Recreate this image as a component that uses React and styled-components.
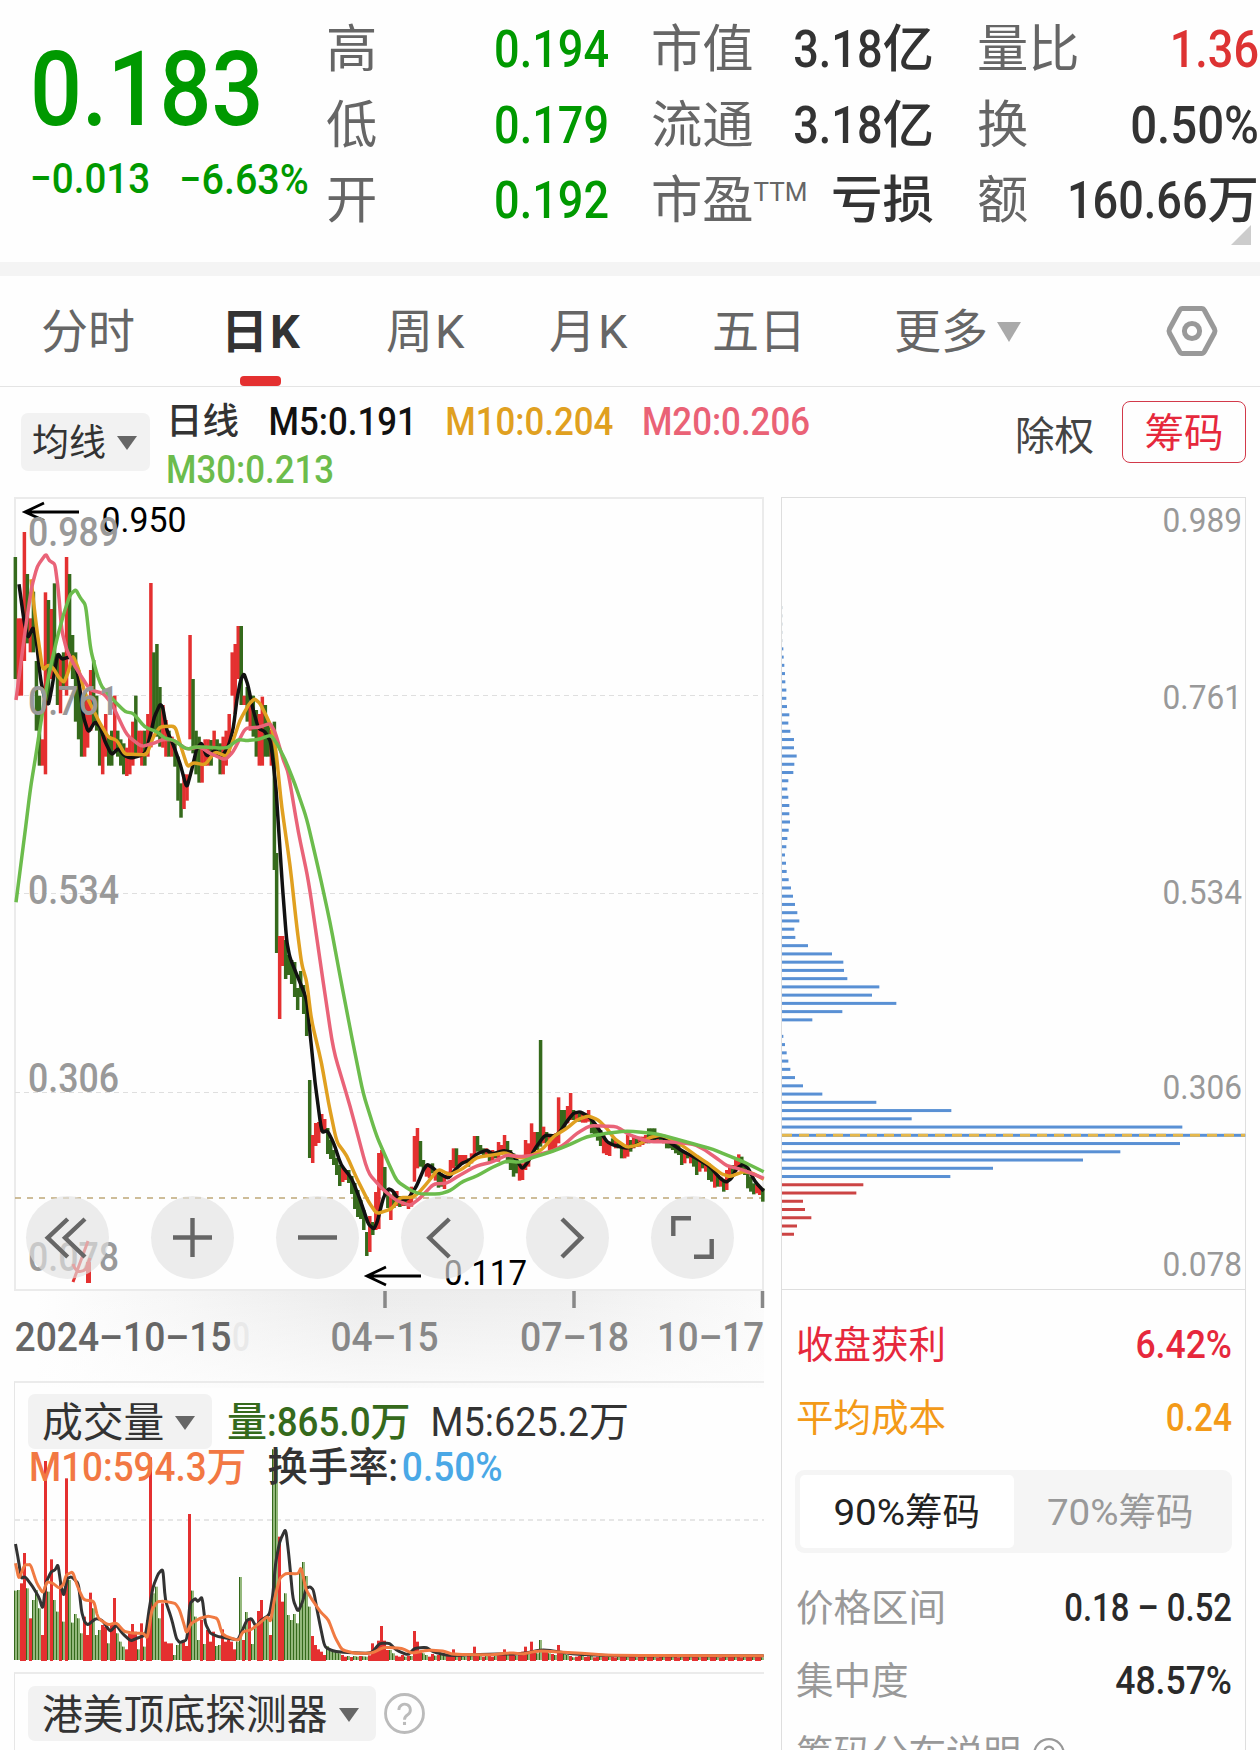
import styled, { createGlobalStyle } from "styled-components";

const RED = "#e43030";
const GREEN = "#356a1c";

const GlobalStyle = createGlobalStyle`
  * { box-sizing: border-box; }
  body {
    margin: 0;
    background: #fefefe;
    color: #333;
    font-family: Roboto, "Noto Sans CJK SC", sans-serif;
  }
`;

const Page = styled.div`
  width: 1260px;
  height: 1750px;
  overflow: hidden;
`;

// narrow, tall digits: a smaller size stretched upwards from the baseline
const Num = styled.span`
  display: inline-block;
  font-size: ${({ $w = 0.88 }) => $w}em;
  line-height: 1;
  white-space: pre;
  transform: scaleY(${({ $w = 0.88 }) => 1 / $w});
  transform-origin: 0 84.15%;
`;

/* ---------- quote header ---------- */

const Header = styled.header`
  height: 276px;
  border-bottom: 14px solid #f4f4f4;
  display: flex;
  padding: 12px 1px 0 30px;
  position: relative;
`;

const PriceBlock = styled.div`
  width: 296px;
  color: #009900;
  font-weight: 500;
`;

const Price = styled.div`
  font-size: 104px;
  line-height: 120px;
  padding-top: 18px;
`;

const Change = styled.div`
  font-size: 42px;
  line-height: 60px;
  margin-top: 11px;
  display: flex;
  gap: 29px;
`;

const StatColumn = styled.dl`
  margin: 0 ${({ $gap }) => $gap}px 0 0;
  width: ${({ $width }) => $width}px;
  flex-shrink: 0;
`;

const Stat = styled.div`
  display: flex;
  justify-content: space-between;
  height: 75.5px;
  line-height: 75.5px;
  font-size: 51.3px;
  white-space: nowrap;
`;

const StatName = styled.dt`
  color: #666;
`;

const Ttm = styled.sup`
  font-size: 26px;
  line-height: 1;
  vertical-align: 17px;
`;

const StatValue = styled.dd`
  margin: 0;
  font-size: 51.5px;
  font-weight: 500;
  color: ${({ $color = "#333" }) => $color};
`;

const Corner = styled.i`
  position: absolute;
  right: 9px;
  bottom: 17px;
  border-left: 20px solid transparent;
  border-bottom: 20px solid #ccc;
`;

/* ---------- period tabs ---------- */

const Tabs = styled.nav`
  height: 111px;
  border-bottom: 1px solid #e4e4e4;
  display: flex;
  padding-left: 41px;
  font-size: 47px;
  color: #666;
`;

const Tab = styled.div`
  width: ${({ $width }) => $width}px;
  display: flex;
  flex-direction: column;
  align-items: flex-start;
  line-height: 112px;
  height: 110px;
  white-space: nowrap;
  font-weight: ${({ $active }) => ($active ? 700 : 400)};
  color: ${({ $active }) => ($active ? "#333" : "inherit")};
`;

const Latin = styled(Num)`
  margin-left: 2px;
`;

const TabBar = styled.i`
  width: 41px;
  height: 10px;
  border-radius: 4px;
  background: ${RED};
  margin: -12px 0 0 19px;
`;

const Arrow = styled.i`
  display: inline-block;
  border: ${({ $size = 10 }) => $size}px solid transparent;
  border-top: ${({ $tall = 14 }) => $tall}px solid ${({ $color = "#666" }) => $color};
  border-bottom: 0;
  margin-left: ${({ $gap = 11 }) => $gap}px;
  vertical-align: ${({ $lift = 7 }) => $lift}px;
`;

const Gear = styled.svg`
  width: 54px;
  height: 54px;
  margin: 28px 0 0 1px;
  fill: none;
  stroke: #999;
`;

/* ---------- moving averages ---------- */

const AverageBar = styled.section`
  height: 110px;
  display: flex;
  padding-left: 21px;
`;

const Picker = styled.div`
  width: ${({ $width }) => $width}px;
  height: ${({ $height = 55 }) => $height}px;
  line-height: ${({ $height = 55 }) => $height + 3}px;
  padding-left: ${({ $pad = 14 }) => $pad}px;
  border-radius: 7px;
  background: #f2f2f2;
  font-size: ${({ $size = 40.8 }) => $size}px;
  font-weight: 400;
  white-space: nowrap;
  flex-shrink: 0;
`;

const AveragePicker = styled(Picker)`
  margin-top: 26px;
`;

const Legend = styled.div`
  width: 700px;
  margin-left: 16px;
  padding-top: 11px;
  font-size: 38.5px;
  line-height: 48px;
  font-weight: 500;
  display: flex;
  flex-wrap: wrap;
  align-content: flex-start;
  column-gap: 28.5px;
`;

const LegendItem = styled.span`
  color: ${({ $color = "#333" }) => $color};
  font-size: ${({ $size }) => ($size ? `${$size}px` : "inherit")};
  font-weight: ${({ $weight = 500 }) => $weight};
  margin-left: ${({ $left = 0 }) => $left}px;
  white-space: nowrap;
`;

const Rights = styled.div`
  margin-left: auto;
  font-size: 39.5px;
  line-height: 99px;
  color: #444;
`;

const ChipsButton = styled.div`
  width: 124px;
  height: 62px;
  margin: 14px 14px 0 28px;
  border: 1.5px solid #d2394a;
  border-radius: 8px;
  color: #e6283c;
  font-size: 39.5px;
  line-height: 63px;
  text-align: center;
`;

/* ---------- main area ---------- */

const Main = styled.main`
  display: flex;
  padding-left: 14px;
  height: 1253px;
`;

const Left = styled.div`
  width: 750px;
  margin-right: 17px;
`;

const PriceChart = styled.div`
  position: relative;
  height: 793px;
`;

const Plot = styled.svg`
  display: block;
  overflow: visible;
`;

const Tools = styled.div`
  position: absolute;
  left: 12px;
  bottom: 11px;
  display: flex;
  gap: 42px;
`;

const Tool = styled.svg`
  width: 83px;
  height: 83px;
  border-radius: 50%;
  background: rgba(226, 226, 226, 0.65);
  fill: none;
  stroke: #666;
  stroke-width: 4.4;
`;

const DateAxis = styled.div`
  height: 98px;
  background:
    linear-gradient(to bottom, transparent, rgba(254, 254, 254, 0.8)),
    linear-gradient(to right, #fefefe 3%, #ebebeb 46%, #eeeeee 72%, #fafafa 100%);
`;

const VolumeChart = styled.section`
  height: 279px;
  margin-top: -7px;
  border-left: 1px solid #e6e6e6;
  border-top: 2px solid #ebebeb;
  position: relative;
`;

const VolumePlot = styled(Plot)`
  position: absolute;
  left: -1px;
  top: -2px;
`;

const VolumeLegend = styled.div`
  position: relative;
  font-size: 40px;
  font-weight: 500;
  color: #333;
`;

const VolumeRow = styled.div`
  display: flex;
  line-height: ${({ $line }) => $line + 2}px;
  height: ${({ $line }) => $line}px;
  padding-left: ${({ $pad }) => $pad}px;
  margin-top: ${({ $top = 0 }) => $top}px;
  column-gap: ${({ $gap }) => $gap}px;
  white-space: nowrap;
`;

const Turnover = styled.span`
  font-size: 40.3px;
`;

const Detector = styled.section`
  margin-top: 12px;
  height: 90px;
  border-left: 1px solid #e6e6e6;
  border-top: 2px solid #ebebeb;
  padding: 12px 0 0 13px;
  display: flex;
  color: #333;
`;

const Help = styled.svg`
  width: ${({ $size }) => $size}px;
  height: ${({ $size }) => $size}px;
  margin: ${({ $top }) => $top}px 0 0 ${({ $left = 8 }) => $left}px;
  fill: none;
  stroke: ${({ $color }) => $color};
`;

const ChipPanel = styled.aside`
  width: 465px;
  border: 1px solid #dedede;
  border-bottom: 0;
  height: 1260px;
`;

const ChipPlot = styled(Plot)`
  border-bottom: 1px solid #dedede;
`;

const ChipInfo = styled.div`
  padding: 19px 13px 0 14px;
  font-size: 37.5px;
`;

const InfoRow = styled.div`
  display: flex;
  justify-content: ${({ $pack = "space-between" }) => $pack};
  height: 73px;
  line-height: 73px;
  color: ${({ $color = "#999" }) => $color};
`;

const InfoValue = styled.span`
  font-weight: 500;
  font-size: 38px;
  color: ${({ $color = "#2a2a2a" }) => $color};
`;

const Segment = styled.div`
  display: flex;
  height: 83px;
  margin: 15px 0 19px -1px;
  padding: 5px;
  border-radius: 9px;
  background: #f5f5f5;
`;

const SegmentItem = styled.div`
  flex: 1;
  line-height: 75px;
  text-align: center;
  border-radius: 5px;
  background: ${({ $on }) => ($on ? "#fff" : "transparent")};
  color: ${({ $on }) => ($on ? "#222" : "#999")};
`;

/* ---------- chart data ---------- */

// moves a run of points from its own origin and scale into chart space
const run = (x0, y0, kx, ky, flat) => {
  const out = [];
  for (let i = 0; i < flat.length; i += 2) {
    out.push([x0 + flat[i] / kx, y0 + flat[i + 1] / ky]);
  }
  return out;
};

// smooth path through the points
const curve = (pts) => {
  let d = `M${pts[0][0].toFixed(1)} ${pts[0][1].toFixed(1)}`;
  for (let i = 1; i < pts.length - 1; i++) {
    const mx = (pts[i][0] * 3 + pts[i + 1][0]) / 4;
    const my = (pts[i][1] * 3 + pts[i + 1][1]) / 4;
    const ax = (pts[i][0] * 3 + pts[i - 1][0]) / 4;
    const ay = (pts[i][1] * 3 + pts[i - 1][1]) / 4;
    d += `L${ax.toFixed(1)} ${ay.toFixed(1)}Q${pts[i][0].toFixed(1)} ${pts[i][1].toFixed(1)} ${mx.toFixed(1)} ${my.toFixed(1)}`;
  }
  const last = pts[pts.length - 1];
  return `${d}L${last[0].toFixed(1)} ${last[1].toFixed(1)}`;
};

// high, low, up (1) or down (0), one entry per trading day
const EARLY = [
  [201, 567, 0], [385, 617, 1], [385, 617, 1], [126, 513, 1], [252, 460, 0], [385, 487, 1],
  [305, 487, 0], [513, 722, 0], [617, 827, 0], [748, 827, 1], [307, 853, 1], [330, 645, 0],
  [357, 567, 1], [280, 530, 0], [490, 645, 0], [500, 670, 1], [487, 600, 0], [201, 617, 1],
  [252, 500, 0], [435, 567, 0], [487, 695, 0], [540, 748, 0], [617, 800, 0], [600, 800, 1],
  [620, 773, 1], [540, 722, 1], [510, 700, 0], [617, 722, 0], [700, 827, 0], [710, 853, 1],
  [672, 800, 1], [740, 827, 0], [722, 827, 0], [617, 780, 1], [722, 800, 0], [748, 827, 0],
  [760, 853, 0], [773, 858, 1], [740, 853, 1], [695, 827, 1], [617, 790, 0], [722, 800, 1],
  [722, 827, 1], [722, 827, 0], [672, 800, 1], [279, 772, 1], [487, 722, 0], [462, 740, 0],
  [591, 770, 0], [645, 773, 1], [690, 800, 1], [722, 800, 0], [740, 800, 1], [760, 830, 0],
  [800, 932, 0], [880, 983, 0], [853, 957, 1], [853, 932, 1], [435, 748, 1], [567, 790, 0],
  [722, 853, 0], [740, 878, 0], [770, 878, 1], [748, 827, 1], [748, 827, 1], [750, 827, 0],
  [722, 800, 1], [748, 800, 0], [760, 853, 0], [740, 853, 1], [722, 827, 1], [672, 800, 1],
  [487, 617, 1], [462, 672, 1], [408, 567, 1], [408, 645, 0], [617, 645, 1], [591, 695, 0],
  [645, 722, 1], [617, 740, 0], [660, 800, 0], [672, 827, 1], [620, 827, 1], [645, 800, 0],
  [695, 800, 0], [720, 827, 1], [695, 1140, 0],
];
const FALL = [
  [853, 953, 0], [936, 1019, 1], [936, 966, 1], [940, 979, 0], [955, 975, 0], [960, 984, 0],
  [962, 997, 0], [988, 1010, 0], [971, 997, 0], [985, 1014, 0], [1000, 1036, 0], [1080, 1158, 0],
  [1135, 1163, 1], [1123, 1146, 1], [1122, 1143, 1], [1114, 1132, 1], [1119, 1130, 1],
  [1128, 1154, 0], [1140, 1159, 0], [1150, 1165, 0], [1158, 1175, 0], [1165, 1186, 0],
  [1168, 1182, 1], [1170, 1180, 1], [1170, 1183, 0], [1176, 1194, 0], [1183, 1209, 0],
  [1190, 1217, 0], [1200, 1219, 0], [1210, 1230, 0], [1232, 1256, 0], [1216, 1252, 1],
  [1222, 1235, 0], [1192, 1230, 1], [1153, 1229, 1], [1150, 1190, 1], [1167, 1195, 0],
  [1190, 1208, 0], [1195, 1220, 1], [1193, 1208, 0], [1191, 1206, 1], [1196, 1207, 0],
  [1196, 1206, 1], [1197, 1206, 0],
];
const LATE = [
  [530, 567, 1], [500, 560, 1], [348, 485, 1], [324, 445, 1], [363, 440, 0], [420, 450, 0],
  [432, 470, 1], [435, 475, 1], [430, 460, 0], [450, 482, 1], [455, 503, 0], [460, 500, 0],
  [465, 507, 1], [455, 475, 1], [420, 465, 1], [385, 445, 1], [385, 440, 0], [405, 440, 1],
  [405, 430, 1], [405, 430, 1], [415, 440, 0], [400, 430, 1], [348, 410, 1], [348, 395, 0],
  [375, 400, 0], [385, 410, 0], [385, 405, 1], [395, 425, 0], [390, 425, 1], [395, 415, 0],
  [366, 425, 1], [375, 400, 1], [345, 400, 1], [363, 430, 0], [390, 450, 0], [400, 470, 0],
  [405, 460, 0], [430, 482, 1], [430, 480, 1], [360, 450, 1], [370, 440, 1], [310, 400, 1],
  [336, 400, 1], [336, 390, 0], [60, 380, 0], [320, 370, 1], [336, 370, 0], [350, 390, 1],
  [355, 390, 1], [340, 385, 1], [232, 370, 1], [270, 330, 0], [270, 325, 0], [258, 310, 1],
  [219, 300, 1], [270, 300, 0], [278, 305, 1], [280, 305, 0], [280, 308, 1], [280, 308, 1],
  [270, 305, 1], [290, 340, 0], [310, 345, 0], [320, 362, 0], [330, 378, 0], [345, 400, 1],
  [365, 405, 1], [365, 408, 1], [355, 378, 0], [360, 385, 1], [365, 385, 0], [370, 415, 0],
  [375, 415, 1], [345, 410, 1], [360, 395, 0], [345, 385, 1], [355, 380, 0], [350, 380, 1],
  [350, 375, 1], [345, 370, 1], [325, 370, 0], [325, 350, 0], [325, 365, 0], [345, 365, 1],
  [345, 365, 0], [345, 370, 1], [350, 385, 0], [355, 385, 0], [360, 390, 0], [365, 400, 0],
  [370, 405, 0], [390, 435, 0], [395, 430, 1], [400, 415, 0], [400, 430, 1], [405, 440, 0],
  [415, 465, 0], [415, 455, 1], [420, 445, 0], [425, 455, 1], [430, 480, 0], [450, 485, 0],
  [455, 503, 1], [465, 500, 0], [470, 500, 1], [480, 515, 0], [450, 510, 1], [435, 480, 1],
  [435, 465, 0], [420, 455, 1], [403, 450, 1], [410, 450, 0], [430, 465, 0], [450, 505, 0],
  [470, 515, 0], [490, 523, 0], [495, 520, 1], [500, 525, 1], [505, 545, 0],
];

const candles = [
  ...EARLY.map(([h, l, up], i) => ({ x: 15.3 + i * 3.012, h: 490 + h / 3, l: 490 + l / 3, up })),
  ...FALL.map(([h, l, up], i) => ({ x: 276.6 + i * 3.005, h, l, up })),
  ...LATE.map(([h, l, up], i) => ({ x: 408.4 + i * 3.003, h: 1020 + h / 3, l: 1020 + l / 3, up })),
];

const LINES = [
  {
    color: "#111",
    pts: [
      ...run(0, 490, 3, 3, [57, 283, 73, 400, 84, 445, 100, 410, 108, 445, 122, 570, 136, 635, 146, 643, 158, 580, 173, 490, 186, 508, 200, 503, 220, 500, 235, 560, 250, 680, 265, 728, 285, 695, 300, 710, 315, 755, 335, 795, 355, 775, 370, 795, 392, 805, 435, 793, 450, 740, 463, 680, 480, 643, 488, 650, 500, 720, 520, 765, 540, 820, 560, 895, 575, 840, 590, 775, 605, 758, 620, 800, 645, 780, 665, 800, 685, 770, 700, 715, 712, 620, 722, 570, 732, 550, 745, 590, 757, 650, 775, 715, 795, 725, 812, 755, 822, 840]),
      ...run(240, 700, 3, 2.613, [108, 230, 125, 460, 140, 630, 150, 675, 200, 780, 210, 870, 225, 1000, 245, 1130, 262, 1125, 280, 1155, 303, 1215, 335, 1250, 360, 1305, 385, 1370, 402, 1383, 413, 1360, 430, 1300, 445, 1277, 458, 1282, 475, 1305, 503, 1305, 530, 1270]),
      ...run(360, 1020, 3, 3, [190, 450, 202, 433, 220, 445, 245, 465, 265, 475, 285, 450, 305, 430, 330, 420, 350, 402, 380, 390, 397, 402, 430, 392, 450, 395, 470, 420, 487, 447, 505, 425, 525, 385, 555, 345, 585, 348, 600, 335, 620, 305, 640, 280, 660, 275, 690, 292, 715, 325, 740, 365, 760, 375, 800, 385, 830, 375, 870, 355, 905, 350, 935, 372, 970, 395, 1010, 415, 1050, 440, 1080, 475, 1098, 487, 1115, 475, 1130, 445, 1150, 432, 1165, 445, 1185, 485, 1211, 513]),
    ],
  },
  {
    color: "#e0a020",
    pts: [
      ...run(0, 490, 3, 3, [93, 268, 100, 330, 112, 430, 128, 540, 145, 525, 160, 535, 175, 560, 192, 578, 205, 545, 218, 495, 235, 535, 255, 610, 275, 650, 300, 700, 325, 742, 350, 750, 375, 793, 400, 793, 440, 795, 460, 740, 480, 710, 525, 708, 540, 760, 562, 830, 580, 818, 615, 825, 645, 785, 680, 800, 700, 750, 720, 690, 745, 645, 763, 626, 780, 640, 800, 680, 818, 720, 830, 800]),
      ...run(240, 700, 3, 2.613, [125, 280, 150, 430, 170, 590, 185, 690, 200, 735, 215, 840, 245, 950, 265, 1050, 290, 1155, 320, 1190, 350, 1250, 385, 1310, 410, 1343, 455, 1330, 480, 1300, 515, 1300]),
      ...run(360, 1020, 3, 3, [175, 520, 205, 485, 235, 447, 270, 465, 310, 445, 350, 412, 400, 405, 435, 398, 480, 415, 520, 405, 550, 385, 580, 350, 620, 325, 650, 300, 685, 287, 715, 300, 740, 325, 765, 358, 800, 382, 835, 375, 870, 352, 905, 345, 950, 365, 985, 390, 1020, 415, 1050, 435, 1085, 462, 1110, 470, 1150, 455, 1175, 458, 1211, 478]),
    ],
  },
  {
    color: "#e96378",
    pts: [
      ...run(0, 490, 3, 3, [48, 630, 65, 500, 80, 390, 95, 290, 112, 228, 138, 192, 148, 212, 165, 222, 175, 300, 185, 420, 200, 480, 225, 530, 270, 600, 310, 610, 335, 640, 380, 735, 425, 770, 465, 758, 490, 748, 520, 750, 560, 778, 600, 770, 630, 790, 675, 810, 700, 785, 735, 715, 775, 712, 810, 700, 825, 725, 850, 810]),
      ...run(240, 700, 3, 2.613, [145, 190, 175, 345, 205, 470, 240, 680, 280, 915, 330, 1060, 383, 1235, 430, 1280]),
      ...run(360, 1020, 3, 3, [110, 542, 150, 557, 180, 535, 220, 492, 260, 490, 300, 465, 350, 437, 400, 425, 440, 405, 480, 410, 530, 405, 580, 392, 615, 372, 650, 340, 690, 317, 735, 318, 770, 320, 810, 345, 865, 365, 930, 365, 1000, 372, 1035, 390, 1070, 415, 1100, 437, 1150, 450, 1211, 475]),
    ],
  },
  {
    color: "#6cbc4c",
    pts: [
      ...run(0, 490, 3, 3, [48, 1237, 72, 1050, 92, 890, 110, 780, 130, 650, 145, 560, 170, 450, 190, 375, 210, 315, 227, 298, 240, 322, 257, 345, 272, 480, 290, 550, 305, 590, 340, 630, 375, 665, 400, 670, 435, 712, 470, 725, 495, 745, 520, 750, 560, 778, 590, 770, 680, 775, 715, 748, 740, 752, 775, 748, 812, 735, 830, 760]),
      ...run(240, 700, 3, 2.613, [135, 155, 165, 220, 200, 310, 235, 440, 270, 580, 300, 720, 335, 880, 370, 1030, 410, 1140, 440, 1200]),
      ...run(360, 1020, 3, 3, [110, 483, 150, 510, 180, 522, 240, 522, 270, 512, 310, 483, 350, 468, 400, 440, 440, 423, 480, 427, 520, 412, 560, 400, 620, 378, 680, 350, 740, 340, 800, 333, 880, 340, 930, 352, 1000, 372, 1060, 388, 1100, 405, 1150, 425, 1211, 455]),
    ],
  },
];

// tops of the volume bars, negative for falling days
const VOLUMES = [
  -662, -660, 640, 549, -655, 745, -690, -660, -715, 795, 273, -665, 568, -690, -725, 640, -755,
  325, -630, -758, -732, -745, -790, 740, 795, 668, -715, -795, -780, 765, 770, -820, 765, 684,
  -790, -815, -830, 838, 790, 762, 785, -838, 760, -830, 750, 262, -670, -650, -745, 700, 815,
  820, 820, -855, -825, -820, 815, 828, 432, -662, -740, -810, 750, -822, 780, 815, 785, -828,
  -825, 778, 815, 810, 815, 838, -815, -621, 810, -726, 750, -822, -770, 723, 690, -745, -740,
  795, -238, -238, 500, 695, -670, -735, -750, -732, -760, -600, -576, -618, -710, 798, 825, 838,
  845, 855, -828, -840, -842, -845, -850, 855, 860, -858, 861, -858, -860, 858, -859, -860, 856,
  820, 835, 812, 768, 812, 840, -840, -850, 857, 860, 855, -860, 857, -858, 783, 815, 845, -850,
  -855, 860, 852, -857, 855, -850, -856, 858, 855, 838, -850, 857, -855, -860, 858, -857, 830,
  850, -857, 860, -855, 857, 860, -858, 850, 853, 838, -855, 850, 848, -857, 855, 845, 830, -850,
  815, 848, -850, -810, 840, 845, -850, 852, -855, 825, 848, -852, -855, 858,
];
while (VOLUMES.length < 250) {
  const i = VOLUMES.length;
  VOLUMES.push((i % 3 ? 1 : -1) * (856 + ((i * 5) % 7)));
}

const VOLUME_LINES = [
  {
    color: "#333",
    pts: run(0, 1370, 2.45, 3, [38, 522, 45, 570, 52, 625, 62, 620, 80, 650, 95, 680, 105, 718, 112, 640, 125, 605, 135, 600, 142, 583, 150, 650, 156, 678, 165, 625, 175, 620, 192, 640, 200, 725, 207, 755, 215, 765, 235, 745, 250, 750, 270, 785, 285, 765, 300, 790, 320, 813, 335, 805, 357, 795, 365, 720, 375, 650, 388, 610, 399, 597, 405, 690, 420, 745, 432, 805, 440, 818, 458, 810, 465, 700, 478, 685, 485, 695, 495, 680, 503, 760, 515, 790, 535, 800, 560, 805, 583, 810, 592, 785, 605, 750, 616, 745, 627, 770, 640, 750, 660, 735, 668, 680, 675, 580, 685, 515, 700, 475, 708, 560, 718, 690, 730, 725, 740, 700, 750, 655, 760, 650, 768, 660, 780, 740, 795, 830, 815, 843, 850, 848, 910, 850, 930, 820, 955, 820, 970, 840, 1000, 855, 1015, 835, 1045, 832, 1060, 845, 1100, 857, 1200, 852, 1280, 852, 1330, 838, 1400, 852, 1500, 857, 1871, 857]),
  },
  {
    color: "#f07a42",
    pts: run(0, 1370, 2.45, 3, [38, 580, 46, 628, 60, 585, 75, 583, 90, 640, 105, 670, 115, 635, 130, 640, 145, 655, 155, 645, 162, 615, 178, 605, 190, 650, 205, 690, 230, 693, 240, 745, 265, 765, 285, 758, 305, 785, 330, 790, 352, 790, 361, 805, 372, 720, 385, 695, 400, 693, 430, 700, 440, 720, 450, 760, 457, 790, 468, 760, 490, 745, 510, 738, 533, 745, 545, 795, 585, 812, 595, 785, 615, 780, 640, 755, 655, 740, 663, 755, 672, 690, 685, 625, 700, 610, 730, 612, 738, 592, 750, 660, 765, 690, 785, 725, 805, 750, 820, 800, 838, 840, 870, 850, 910, 850, 940, 832, 985, 835, 1010, 850, 1050, 840, 1085, 843, 1110, 853, 1200, 855, 1250, 848, 1280, 852, 1320, 842, 1400, 848, 1500, 856, 1871, 857]),
  },
];

// chip distribution, top price first, in thirds of a pixel
const CHIPS = [
  4, 5, 7, 9, 10, 13, 13, 15, 22, 19, 25, 36, 36, 44, 37, 34, 19, 16, 19, 22, 22, 24, 20, 16, 13,
  9, 12, 14, 20, 27, 33, 39, 46, 52, 37, 40, 78, 150, 184, 186, 196, 292, 270, 343, 181, 91, 0, 4,
  9, 14, 19, 25, 39, 63, 121, 283, 508, 389, 1201, 1390, 1194, 1015, 903, 633, 505, 244, 223, 63,
  69, 88, 45, 36,
];

const STATS = [
  {
    width: 283,
    gap: 42,
    rows: [["高", "0.194", "", "#009900"], ["低", "0.179", "", "#009900"], ["开", "0.192", "", "#009900"]],
  },
  {
    width: 283,
    gap: 43,
    rows: [["市值", "3.18", "亿"], ["流通", "3.18", "亿"], ["市盈", "", "亏损"]],
  },
  {
    width: 282,
    gap: 0,
    rows: [["量比", "1.36", "", "#dd3333"], ["换", "0.50%", ""], ["额", "160.66", "万"]],
  },
];

const TOOL_ICONS = [
  "M.2-18.5-19.8.3.2 19.5M17.5-18.5-2.5.3 17.5 19.5",
  "M-19.5 0H19.5M0-19.5V19.5",
  "M-19.5 0H19.5",
  "M6.8-18.5-13.2.3 6.8 19.5",
  "M-5.5-18.5 13.8.3-5.5 19.5",
  "M-19.2-1.5V-19.2H-1.5M19.2 1.5V19.2H1.5",
];

const Label = ({ x, y, w, size, children, color = "#999", weight = 400 }) => (
  <text
    x={x}
    y={y}
    fontSize={size}
    fontWeight={weight}
    fill={color}
    textLength={w}
    lengthAdjust="spacingAndGlyphs"
  >
    {children}
  </text>
);

const Stats = ({ width, gap, rows }) => (
  <StatColumn $width={width} $gap={gap}>
    {rows.map(([name, num, unit, color]) => (
      <Stat key={name}>
        <StatName>
          {name}
          {name === "市盈" && <Ttm>TTM</Ttm>}
        </StatName>
        <StatValue $color={color}>
          {num && <Num $w={num.endsWith("%") ? 0.92 : 0.875}>{num}</Num>}
          {unit}
        </StatValue>
      </Stat>
    ))}
  </StatColumn>
);

const Candles = () => (
  <Plot width="750" height="793" viewBox="14 497 750 793">
    <rect x="15" y="498" width="748" height="792" fill="none" stroke="#ebebeb" strokeWidth="2" />
    {[695.5, 893.5, 1092.5].map((y) => (
      <path key={y} d={`M15 ${y}H763`} stroke="#dfdfdf" strokeWidth="1.2" strokeDasharray="5 4" />
    ))}
    <path d="M15 1198H763" stroke="#bfa878" strokeWidth="1.6" strokeDasharray="6 6" />
    {candles.map(({ x, h, l, up }) => (
      <rect key={x} x={x - 1.7} y={h} width="3.5" height={l - h} fill={up ? RED : GREEN} />
    ))}
    {LINES.map(({ color, pts }) => (
      <path key={color} d={curve(pts)} fill="none" stroke={color} strokeWidth="3.5" strokeLinejoin="round" />
    ))}
    <g fill="none" stroke="#000" strokeWidth="2.8">
      <path d="M79 512H25M44 503 25 512 44 520.5" />
      <path d="M421 1276H367M386 1267 367 1276 386 1285" />
    </g>
    <Label x="101.500" y="532" w="85" size="34.5" color="#000">0.950</Label>
    <Label x="444" y="1285" w="83" size="34.500" color="#000">0.117</Label>
    <Label x="28" y="546" w="91" size="40" weight="500">0.989</Label>
    <Label x="28" y="715" w="91" size="40" weight="500">0.761</Label>
    <Label x="28" y="904" w="91" size="40" weight="500">0.534</Label>
    <Label x="28" y="1092" w="91" size="40" weight="500">0.306</Label>
    <Label x="28" y="1270.500" w="91" size="40" weight="500">0.078</Label>
    <path d="M73 1282 88 1241M73 1264Q77 1276 86 1269L90 1258" fill="none" stroke={RED} strokeWidth="3" />
    <path d="M88.500 1262V1283" stroke={RED} strokeWidth="5" />
  </Plot>
);

const Dates = () => (
  <Plot width="750" height="98" viewBox="14 1290 750 98">
    <path d="M385 1291V1308M574 1291V1308M762.500 1291V1308" stroke="#888" strokeWidth="3.5" />
    <Label x="232" y="1351" w="18" size="40" weight="500" color="#e9e9e9">0</Label>
    <Label x="14.500" y="1351" w="217" size="40" weight="500" color="#666">2024–10–15</Label>
    <Label x="330.500" y="1351" w="108" size="40" weight="500" color="#888">04–15</Label>
    <Label x="520" y="1351" w="109" size="40" weight="500" color="#888">07–18</Label>
    <Label x="657" y="1351" w="107" size="40" weight="500" color="#888">10–17</Label>
  </Plot>
);

const Volumes = () => (
  <VolumePlot width="750" height="279" viewBox="14 1381 750 279">
    <path d="M15 1520H764" stroke="#e6e6e6" strokeWidth="2" strokeDasharray="5 4" />
    {VOLUMES.map((v, i) => {
      const x = 14 + i * 3;
      const top = 1370 + Math.abs(v) / 3;
      return v > 0 ? (
        <rect key={i} x={x} y={top} width="3" height={1661 - top} fill={RED} />
      ) : (
        <g key={i}>
          <rect x={x} y={top} width="3" height={1660 - top} fill="#94b87c" />
          <rect x={x} y={top} width="1" height={1660 - top} fill={GREEN} />
        </g>
      );
    })}
    {VOLUME_LINES.map(({ color, pts }) => (
      <path key={color} d={curve(pts)} fill="none" stroke={color} strokeWidth="3" strokeLinejoin="round" />
    ))}
  </VolumePlot>
);

const Chips = () => (
  <ChipPlot width="463" height="792" viewBox="782 498 463 791">
    {[64, 63, 62, 61, 60].map((k) => (
      <rect key={k} x="782" y={1133.8 - k * 8.245} width="1" height="3" fill="#dfe6ea" />
    ))}
    {CHIPS.map((w, i) => (
      <rect
        key={i}
        x="782"
        y={1133.8 + (i - 59) * 8.245}
        width={w / 3}
        height="3"
        fill={i > 64 ? "#c44" : "#5990d4"}
      />
    ))}
    <path d="M782 1135.300H1245" stroke="#e6b84c" strokeWidth="3" strokeDasharray="10 7" />
    <Label x="1162.500" y="531.500" w="79.500" size="32.500">0.989</Label>
    <Label x="1162.500" y="708.500" w="79.500" size="32.500">0.761</Label>
    <Label x="1162.500" y="904" w="79.500" size="32.500">0.534</Label>
    <Label x="1162.500" y="1098.500" w="79.500" size="32.500">0.306</Label>
    <Label x="1162.500" y="1275.500" w="79.500" size="32.500">0.078</Label>
  </ChipPlot>
);

const HelpIcon = ({ size, top, left, color }) => (
  <Help $size={size} $top={top} $left={left} $color={color} viewBox="0 0 40 40">
    <circle cx="20" cy="20" r="18.500" strokeWidth="2.800" />
    <path d="M14.500 16.500a5.600 5.600 0 1 1 8.600 4.700c-2.200 1.400-3.100 2.400-3.100 4.800" strokeWidth="2.800" />
    <path d="M20 28.200v3" strokeWidth="3" />
  </Help>
);

export default function App() {
  return (
    <Page>
      <GlobalStyle />
      <Header>
        <PriceBlock>
          <Price><Num>0.183</Num></Price>
          <Change>
            <Num $w={0.92}>−0.013</Num>
            <Num $w={0.94}>−6.63%</Num>
          </Change>
        </PriceBlock>
        {STATS.map((column) => (
          <Stats key={column.rows[0][0]} {...column} />
        ))}
        <Corner />
      </Header>

      <Tabs>
        <Tab $width={180}>分时</Tab>
        <Tab $width={165} $active>
          <span>日<Latin $w={1}>K</Latin></span>
          <TabBar />
        </Tab>
        <Tab $width={163}><span>周<Latin $w={1}>K</Latin></span></Tab>
        <Tab $width={163}><span>月<Latin $w={1}>K</Latin></span></Tab>
        <Tab $width={182}>五日</Tab>
        <Tab $width={270}>
          <span>更多<Arrow $size={12} $tall={20} $gap={9} $lift={6} $color="#aaa" /></span>
        </Tab>
        <Gear viewBox="0 0 54 54">
          <path d="M17.500 4.500H36.500Q38.500 4.500 39.500 6.500L49.500 25Q50.500 27 49.500 29L39.500 47.500Q38.500 49.500 36.500 49.500H17.500Q15.500 49.500 14.500 47.500L4.500 29Q3.500 27 4.500 25L14.500 6.500Q15.500 4.500 17.500 4.500Z" strokeWidth="5" />
          <circle cx="27" cy="27" r="7.600" strokeWidth="5" />
        </Gear>
      </Tabs>

      <AverageBar>
        <AveragePicker $width={129} $height={58} $pad={11} $size={37}>均线<Arrow $lift={6} /></AveragePicker>
        <Legend>
          <LegendItem $size={36.5}>日线</LegendItem>
          <LegendItem $color="#111" $left={1}><Num $w={0.905}>M5:0.191</Num></LegendItem>
          <LegendItem $color="#e0a020"><Num $w={0.905}>M10:0.204</Num></LegendItem>
          <LegendItem $color="#ea6276"><Num $w={0.905}>M20:0.206</Num></LegendItem>
          <LegendItem $color="#6cbc4c"><Num $w={0.905}>M30:0.213</Num></LegendItem>
        </Legend>
        <Rights>除权</Rights>
        <ChipsButton>筹码</ChipsButton>
      </AverageBar>

      <Main>
        <Left>
          <PriceChart>
            <Candles />
            <Tools>
              {TOOL_ICONS.map((d) => (
                <Tool key={d} viewBox="-41.5 -41.5 83 83"><path d={d} /></Tool>
              ))}
            </Tools>
          </PriceChart>
          <DateAxis><Dates /></DateAxis>
          <VolumeChart>
            <Volumes />
            <VolumeLegend>
              <VolumeRow $line={55} $pad={13} $top={11} $gap={15}>
                <Picker $width={184}>成交量<Arrow /></Picker>
                <LegendItem $color={GREEN}>量<Num $w={0.92}>:865.0</Num>万</LegendItem>
                <LegendItem $weight={400} $left={5}><Num $w={0.945}>M5:625.2</Num>万</LegendItem>
              </VolumeRow>
              <VolumeRow $line={36} $pad={14} $gap={21}>
                <LegendItem $color="#f27843"><Num $w={0.92}>M10:594.3</Num>万</LegendItem>
                <Turnover>换手率<Num>:</Num><LegendItem $left={4} $color="#4aa8e6"><Num $w={0.92}>0.50%</Num></LegendItem></Turnover>
              </VolumeRow>
            </VolumeLegend>
          </VolumeChart>
          <Detector>
            <Picker $width={348}>港美顶底探测器<Arrow /></Picker>
            <HelpIcon size={41} top={7} color="#bbb" />
          </Detector>
        </Left>

        <ChipPanel>
          <Chips />
          <ChipInfo>
            <InfoRow $color="#e6283c">收盘获利<InfoValue $color="#e6283c"><Num $w={0.935}>6.42%</Num></InfoValue></InfoRow>
            <InfoRow $color="#f39a18">平均成本<InfoValue $color="#f39a18"><Num>0.24</Num></InfoValue></InfoRow>
            <Segment>
              <SegmentItem $on><Num $w={1.03}>90%</Num>筹码</SegmentItem>
              <SegmentItem><Num $w={1.03}>70%</Num>筹码</SegmentItem>
            </Segment>
            <InfoRow>价格区间<InfoValue><Num $w={0.865}>0.18 – 0.52</Num></InfoValue></InfoRow>
            <InfoRow>集中度<InfoValue><Num $w={0.935}>48.57%</Num></InfoValue></InfoRow>
            <InfoRow $pack="flex-start">
              筹码分布说明
              <HelpIcon size={32} top={20} left={12} color="#999" />
            </InfoRow>
          </ChipInfo>
        </ChipPanel>
      </Main>
    </Page>
  );
}
